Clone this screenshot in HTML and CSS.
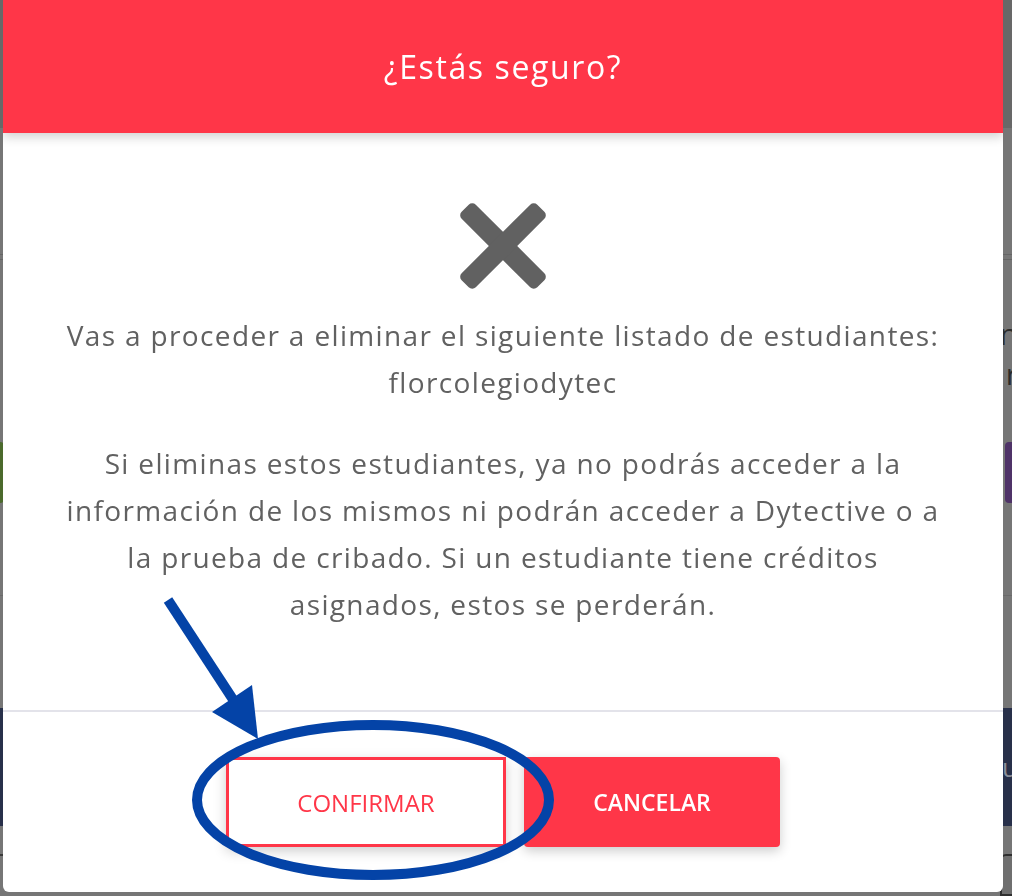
FILE: index.html
```html
<!DOCTYPE html>
<html lang="es">
<head>
    <meta charset="UTF-8">
    <meta name="viewport" content="width=device-width, initial-scale=1.0">
    <title>Eliminar estudiantes</title>
    <link rel="stylesheet" href="styles.css">
</head>
<body>
    <!-- page behind the dialog, already dimmed by the backdrop -->
    <div class="page">
        <div class="page-top"></div>
        <div class="page-rule"></div>
        <div class="page-row page-text page-text-first">
            <span>c</span><span>n</span>
        </div>
        <div class="page-row page-text">
            <span>r</span><span>r</span>
        </div>
        <div class="page-row page-actions">
            <span class="chip chip-green"></span>
            <span class="chip chip-purple"></span>
        </div>
        <div class="page-rule page-rule-low"></div>
        <div class="page-band"><span>u</span></div>
        <div class="page-table">
            <span class="cell-left"></span>
            <span class="cell-right"></span>
        </div>
    </div>

    <div class="modal">
        <header class="modal-header">
            <h2>¿Estás seguro?</h2>
        </header>
        <div class="modal-body">
            <svg class="icon-x" viewBox="0 0 90 88" width="90" height="88">
                <rect x="-8.5" y="34" width="107" height="20" rx="5" transform="rotate(45 45 44)"></rect>
                <rect x="-8.5" y="34" width="107" height="20" rx="5" transform="rotate(-45 45 44)"></rect>
            </svg>
            <p class="lead">Vas a proceder a eliminar el siguiente listado de estudiantes:<br>florcolegiodytec</p>
            <p>Si eliminas estos estudiantes, ya no podrás acceder a la<br>información de los mismos ni podrán acceder a Dytective o a<br>la prueba de cribado. Si un estudiante tiene créditos<br>asignados, estos se perderán.</p>
        </div>
        <div class="modal-footer">
            <button class="btn btn-outline">CONFIRMAR</button>
            <button class="btn btn-fill">CANCELAR</button>
        </div>
    </div>

    <!-- hand drawn markup on top of the screenshot -->
    <svg class="annotation" viewBox="0 0 1012 896" width="1012" height="896">
        <line x1="168" y1="600" x2="234" y2="701" stroke="#0443a7" stroke-width="10"></line>
        <polygon points="212,712 252,685 258,739" fill="#0443a7"></polygon>
        <ellipse cx="373" cy="800" rx="176" ry="75" fill="none" stroke="#0443a7" stroke-width="10"></ellipse>
    </svg>
</body>
</html>
```

FILE: styles.css
```css
body {
    margin: 0;
    width: 1012px;
    height: 896px;
    overflow: hidden;
    background-color: #767676;
    font-family: 'Open Sans', 'Noto Sans', sans-serif;
}

/* Page behind the backdrop */
.page {
    display: flex;
    flex-direction: column;
    height: 896px;
}

.page-top {
    height: 128px;
    background-color: #686868;
}

.page-rule {
    margin-top: 126px;
    height: 6px;
    border-top: 1px solid #656565;
    border-bottom: 1px solid #656565;
    box-sizing: border-box;
}

.page-rule-low {
    margin-top: 92px;
    height: 1px;
    border: none;
    background-color: #6a6a6a;
}

.page-row {
    display: flex;
    justify-content: space-between;
}

.page-text {
    height: 40px;
    font-size: 30px;
    line-height: 40px;
    color: #2b2b2b;
}

.page-text-first {
    margin-top: 54px;
}

.page-text span:first-child {
    margin-left: -14px;
}

.page-text span:last-child {
    margin-right: -6px;
}

.page-actions {
    margin-top: 48px;
    height: 61px;
}

.chip {
    width: 40px;
    border-radius: 4px;
}

.chip-green {
    margin-left: -36px;
    background-color: #4b6a2c;
}

.chip-purple {
    margin-right: -33px;
    background-color: #4f3368;
}

.page-band {
    margin-top: 112px;
    height: 118px;
    flex-shrink: 0;
    background-color: #28304a;
    display: flex;
    justify-content: flex-end;
    align-items: center;
    font-size: 26px;
    color: #8b8f9b;
}

.page-band span {
    margin-right: -6px;
}

.page-table {
    flex: 1;
    display: flex;
    justify-content: space-between;
    padding-top: 28px;
}

.cell-left {
    width: 4px;
    border-top: 2px solid #3a3a3a;
    height: 0;
}

.cell-right {
    width: 20px;
    margin-right: -12px;
    border: 2px solid #2f2f2f;
    border-radius: 6px 0 0 0;
    background-color: #6f6f6f;
}

/* Dialog */
.modal {
    position: fixed;
    top: 0;
    left: 3px;
    width: 1000px;
    height: 892px;
    display: flex;
    flex-direction: column;
    background-color: #fff;
    border-radius: 0 0 6px 6px;
    overflow: hidden;
}

.modal-header {
    position: relative;
    z-index: 1;
    height: 133px;
    flex-shrink: 0;
    display: flex;
    align-items: center;
    justify-content: center;
    background-color: #ff3648;
    box-shadow: 0 4px 10px rgba(0, 0, 0, 0.18);
}

.modal-header h2 {
    margin: 0;
    color: #fff;
    font-size: 32px;
    font-weight: 400;
    letter-spacing: 1.6px;
}

.modal-body {
    flex: 1;
    display: flex;
    flex-direction: column;
    align-items: center;
    padding-top: 69px;
    text-align: center;
    color: #616161;
    font-size: 28px;
    line-height: 47px;
    letter-spacing: 1.35px;
}

.icon-x {
    fill: #616161;
}

.modal-body p {
    margin: 34px 0 0;
    white-space: nowrap;
}

.modal-body p.lead {
    margin-top: 22px;
}

.modal-footer {
    flex-shrink: 0;
    display: flex;
    justify-content: center;
    gap: 18px;
    padding: 45px 0 45px;
    border-top: 2px solid #e3e3ea;
}

.btn {
    height: 90px;
    font-family: 'Open Sans', 'Noto Sans', sans-serif;
    cursor: pointer;
    box-shadow: 0 4px 12px rgba(0, 0, 0, 0.2);
}

.btn-outline {
    width: 280px;
    background-color: #fff;
    color: #ff3648;
    border: 3px solid #ff3648;
    font-size: 24px;
    font-weight: 400;
}

.btn-fill {
    width: 256px;
    background-color: #ff3648;
    color: #fff;
    border: none;
    border-radius: 4px;
    font-size: 23px;
    font-weight: 600;
}

/* Annotation overlay */
.annotation {
    position: absolute;
    top: 0;
    left: 0;
    pointer-events: none;
}
```
